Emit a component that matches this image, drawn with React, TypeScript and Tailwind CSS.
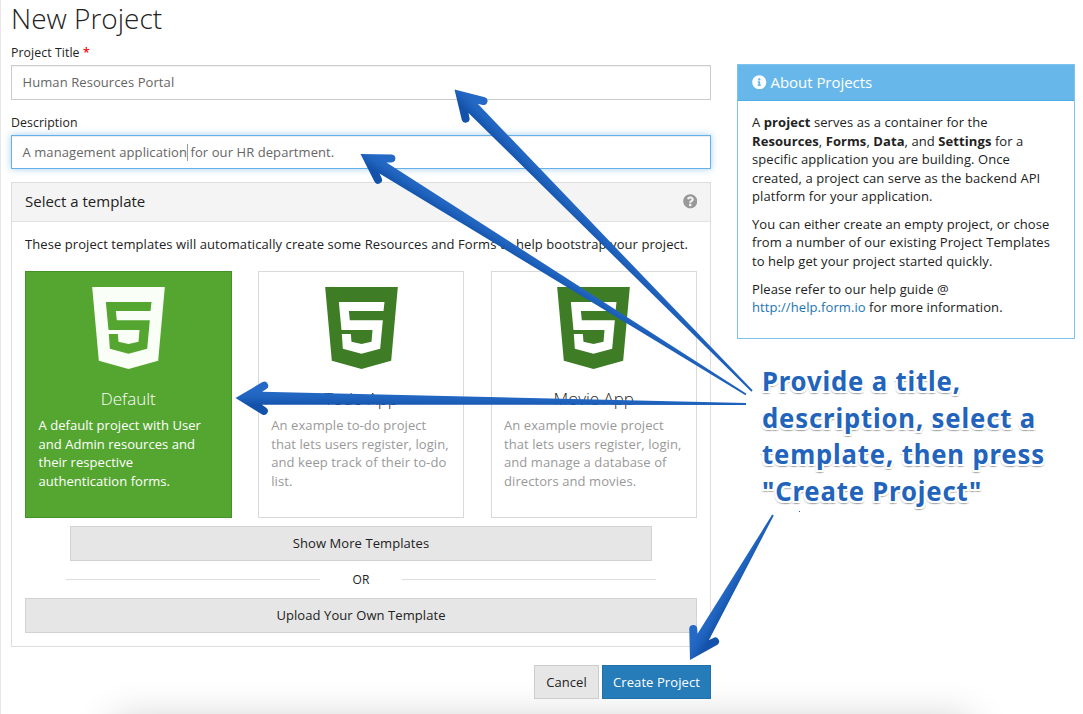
import { FaInfoCircle, FaQuestionCircle } from "react-icons/fa";

function Html5Logo({ className }: { className: string }) {
  return (
    <svg viewBox="0 0 218 246" className={"h-[82px] w-[73px] shrink-0 " + className} fill="currentColor">
      <path
        fillRule="evenodd"
        d="M0 0H218L198 221L109 246L20 221ZM41 45L49 129H142L139 164L109 171L79 164L77 141H50L53 185L109 200L165 185L173 100H74L71 72H175L178 45Z"
      />
    </svg>
  );
}

type Template = { name: string; text: string; selected?: boolean };

const templates: Template[] = [
  {
    name: "Default",
    text: "A default project with User and Admin resources and their respective authentication forms.",
    selected: true,
  },
  {
    name: "Todo App",
    text: "An example to-do project that lets users register, login, and keep track of their to-do list.",
  },
  {
    name: "Movie App",
    text: "An example movie project that lets users register, login, and manage a database of directors and movies.",
  },
];

function TemplateCard({ name, text, selected }: Template) {
  return (
    <div
      className={
        "flex h-[247px] w-[206.5px] flex-col items-center border px-[12.5px] pt-[15px] " +
        (selected ? "border-[#449326] bg-[#55a630] text-white" : "border-[#d9d9d9] bg-white text-[#222]")
      }
    >
      <Html5Logo className={selected ? "text-[#f9fef6]" : "text-[#3e7d26]"} />
      <h3 className="mt-[19px] text-[17px] leading-[22px] font-[350] tracking-normal">{name}</h3>
      <p
        className={
          "mt-[6.5px] w-full text-[13px] leading-[18.57px] " +
          (selected ? "font-medium tracking-[0.04px] text-white" : "text-[#999]")
        }
      >
        {text}
      </p>
    </div>
  );
}

type ArrowProps = { id: string; tip: [number, number]; tail: [number, number] };

const arrows: ArrowProps[] = [
  { id: "title", tip: [454.5, 89.5], tail: [752, 391] },
  { id: "description", tip: [360.5, 154], tail: [746, 394.5] },
  { id: "template", tip: [235.5, 398], tail: [746, 404] },
  { id: "create", tip: [690, 660], tail: [773, 515] },
];

function Arrow({ id, tip, tail }: ArrowProps) {
  const dx = tail[0] - tip[0];
  const dy = tail[1] - tip[1];
  const length = Math.hypot(dx, dy);
  const angle = (Math.atan2(dy, dx) * 180) / Math.PI;
  return (
    <g transform={`translate(${tip[0]} ${tip[1]}) rotate(${angle})`}>
      <linearGradient id={id} gradientUnits="userSpaceOnUse" x1="0" x2="0" y1="-7" y2="7">
        <stop offset="0" stopColor="#2469c5" />
        <stop offset="0.4" stopColor="#2064bf" />
        <stop offset="1" stopColor="#1352aa" />
      </linearGradient>
      <path
        fill={`url(#${id})`}
        d={`M0 0L26.8 -16.2A4 4 0 0 1 30.8 -9.3L26.5 -6.5L${length} -0.9V0.9L26.5 6.5L30.8 9.3A4 4 0 0 1 26.8 16.2Z`}
      />
    </g>
  );
}

const wideButton = "flex h-[35px] items-center justify-center border border-[#d2d2d2] bg-[#e6e6e6] text-[13px]";

export default function App() {
  return (
    <div className="relative h-[714px] w-[1083px] overflow-hidden border-l border-[#e7e7e7] bg-white font-['Open_Sans',sans-serif] text-[13px] leading-[18.57px] tracking-[0.08px] text-[#222]">
      <div className="absolute top-[726px] left-[119px] h-10 w-[845px] shadow-[0_0_42px_6px_rgba(0,0,0,0.2)]" />
      <div className="relative flex items-start gap-[26px] pl-[10px]">
        <main className="w-[700px]">
          <h1 className="h-[43px] text-[28px] leading-[36px] font-light tracking-normal">New Project</h1>
          <label className="block h-[22px] pt-px text-[12.3px]">
            Project Title <span className="font-semibold text-[#f00]">*</span>
          </label>
          <div className="flex h-[35px] items-center border border-[#ccc] px-[10.5px] text-[#666] shadow-[inset_0_1px_1px_rgba(0,0,0,0.06)]">
            Human Resources Portal
          </div>
          <label className="mt-[13px] block h-[22px] pt-px text-[12.3px]">Description</label>
          <div className="flex h-[34px] items-center border border-[#66afe9] px-[10.5px] whitespace-pre text-[#666] shadow-[inset_0_1px_1px_rgba(0,0,0,0.075),0_0_7px_rgba(102,175,233,0.6)]">
            A management application<span className="-mr-px h-[17px] w-px bg-[#999]" /> for our HR department.
          </div>

          <section className="mt-[13px] h-[465px] border border-[#ddd]">
            <header className="flex h-[39px] items-center justify-between border-b border-[#e2e2e2] bg-[#f4f4f4] px-[13px]">
              <h2 className="pb-px text-[15px] tracking-normal">Select a template</h2>
              <FaQuestionCircle className="mb-px size-[14.5px] text-[#999]" />
            </header>
            <div className="px-[13px] pt-[13px]">
              <p className="whitespace-nowrap">
                These project templates will automatically create some Resources and Forms to help bootstrap your project.
              </p>
              <div className="mt-[17px] flex justify-between">
                {templates.map((t) => (
                  <TemplateCard key={t.name} {...t} />
                ))}
              </div>
              <div className={"mx-[45px] mt-2 " + wideButton}>Show More Templates</div>
              <div className="mx-[41px] flex h-[37px] items-center justify-between text-[12px]">
                <div className="h-px w-[254px] bg-[#ddd]" />
                <span className="pt-[2px]">OR</span>
                <div className="h-px w-[254px] bg-[#ddd]" />
              </div>
              <div className={wideButton}>Upload Your Own Template</div>
            </div>
          </section>

          <div className="mt-[18px] flex justify-end gap-[3px]">
            <button className="h-[34px] w-[65px] border border-[#ccc] bg-[#e6e6e6]">Cancel</button>
            <button className="h-[34px] w-[109px] border border-[#2071a9] bg-[#267cb9] text-white">Create Project</button>
          </div>
        </main>

        <aside className="mt-16 h-[275px] w-[338px] border border-[#7cc4ed]">
          <header className="flex h-[35.5px] items-center gap-1 border-b border-[#4caee5] bg-[#68b7ea] px-[14px] text-[15px] tracking-[-0.04px] text-white">
            <FaInfoCircle className="mb-px size-[14.5px]" />
            About Projects
          </header>
          <div className="flex flex-col gap-[9px] px-[14px] pt-[12.5px]">
            <p>
              A <b>project</b> serves as a container for the
              <br />
              <b>Resources</b>, <b>Forms</b>, <b>Data</b>, and <b>Settings</b> for a
              <br />
              specific application you are building. Once
              <br />
              created, a project can serve as the backend API
              <br />
              platform for your application.
            </p>
            <p>
              You can either create an empty project, or chose
              <br />
              from a number of our existing Project Templates
              <br />
              to help get your project started quickly.
            </p>
            <p>
              Please refer to our help guide @<br />
              <a className="text-[#1c75b3]">http://help.form.io</a> for more information.
            </p>
          </div>
        </aside>
      </div>

      <svg className="absolute top-0 -left-px" width="1083" height="714">
        {arrows.map((a) => (
          <Arrow key={a.id} {...a} />
        ))}
        <rect x="799" y="511" width="1" height="1" fill="#1f5fb8" />
      </svg>
      <p className="absolute top-[363px] left-[761px] origin-left scale-x-[0.95] font-['Noto_Sans',sans-serif] text-[27px] leading-[36.5px] font-bold tracking-[0.9px] whitespace-nowrap text-[#2263bb] [text-shadow:0_2px_0_#fff,2px_0_0_#fff,-2px_0_0_#fff,0_-2px_0_#fff,2px_2px_0_#fff,-2px_2px_0_#fff,0_3px_1px_#aaa,2px_3px_1px_#ccc,-2px_3px_1px_#ccc]">
        Provide a title,
        <br />
        description, select a
        <br />
        template, then press
        <br />
        "Create Project"
      </p>
    </div>
  );
}
